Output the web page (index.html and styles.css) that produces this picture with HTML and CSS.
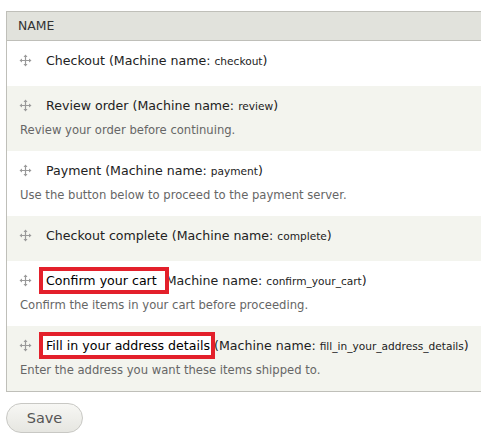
FILE: index.html
```html
<!DOCTYPE html>
<html>
<head>
<meta charset="utf-8">
<link rel="stylesheet" href="styles.css">
</head>
<body>
<div class="page">
  <div class="table">
    <div class="head">NAME</div>
    <div class="row odd">
      <div class="title"><svg class="handle" viewBox="0 0 13 13"><path d="M6.5 0.5 L8.5 3 H4.5 Z M6.5 12.5 L8.5 10 H4.5 Z M0.5 6.5 L3 4.5 V8.5 Z M12.5 6.5 L10 4.5 V8.5 Z" fill="#9a9a9a"/><path d="M6.5 2.5 V10.5 M2.5 6.5 H10.5" stroke="#9a9a9a" stroke-width="1.2"/></svg><span class="label">Checkout (Machine name: <small>checkout</small>)</span></div>
    </div>
    <div class="row even">
      <div class="title"><svg class="handle" viewBox="0 0 13 13"><path d="M6.5 0.5 L8.5 3 H4.5 Z M6.5 12.5 L8.5 10 H4.5 Z M0.5 6.5 L3 4.5 V8.5 Z M12.5 6.5 L10 4.5 V8.5 Z" fill="#9a9a9a"/><path d="M6.5 2.5 V10.5 M2.5 6.5 H10.5" stroke="#9a9a9a" stroke-width="1.2"/></svg><span class="label">Review order (Machine name: <small>review</small>)</span></div>
      <div class="desc">Review your order before continuing.</div>
    </div>
    <div class="row odd">
      <div class="title"><svg class="handle" viewBox="0 0 13 13"><path d="M6.5 0.5 L8.5 3 H4.5 Z M6.5 12.5 L8.5 10 H4.5 Z M0.5 6.5 L3 4.5 V8.5 Z M12.5 6.5 L10 4.5 V8.5 Z" fill="#9a9a9a"/><path d="M6.5 2.5 V10.5 M2.5 6.5 H10.5" stroke="#9a9a9a" stroke-width="1.2"/></svg><span class="label">Payment (Machine name: <small>payment</small>)</span></div>
      <div class="desc">Use the button below to proceed to the payment server.</div>
    </div>
    <div class="row even">
      <div class="title"><svg class="handle" viewBox="0 0 13 13"><path d="M6.5 0.5 L8.5 3 H4.5 Z M6.5 12.5 L8.5 10 H4.5 Z M0.5 6.5 L3 4.5 V8.5 Z M12.5 6.5 L10 4.5 V8.5 Z" fill="#9a9a9a"/><path d="M6.5 2.5 V10.5 M2.5 6.5 H10.5" stroke="#9a9a9a" stroke-width="1.2"/></svg><span class="label">Checkout complete (Machine name: <small>complete</small>)</span></div>
    </div>
    <div class="row odd">
      <div class="title"><svg class="handle" viewBox="0 0 13 13"><path d="M6.5 0.5 L8.5 3 H4.5 Z M6.5 12.5 L8.5 10 H4.5 Z M0.5 6.5 L3 4.5 V8.5 Z M12.5 6.5 L10 4.5 V8.5 Z" fill="#9a9a9a"/><path d="M6.5 2.5 V10.5 M2.5 6.5 H10.5" stroke="#9a9a9a" stroke-width="1.2"/></svg><span class="label"><span class="hl hl-cart">Confirm your cart</span> (Machine name: <small>confirm_your_cart</small>)</span></div>
      <div class="desc">Confirm the items in your cart before proceeding.</div>
    </div>
    <div class="row even">
      <div class="title"><svg class="handle" viewBox="0 0 13 13"><path d="M6.5 0.5 L8.5 3 H4.5 Z M6.5 12.5 L8.5 10 H4.5 Z M0.5 6.5 L3 4.5 V8.5 Z M12.5 6.5 L10 4.5 V8.5 Z" fill="#9a9a9a"/><path d="M6.5 2.5 V10.5 M2.5 6.5 H10.5" stroke="#9a9a9a" stroke-width="1.2"/></svg><span class="label"><span class="hl hl-addr">Fill in your address details</span> (Machine name: <small>fill_in_your_address_details</small>)</span></div>
      <div class="desc">Enter the address you want these items shipped to.</div>
    </div>
  </div>
  <button class="save">Save</button>
</div>
</body>
</html>
```

FILE: styles.css
```css
html, body {
  margin: 0;
  padding: 0;
  background: #fff;
}
body {
  font-family: "DejaVu Sans", "Open Sans", sans-serif;
  color: #333;
  overflow: hidden;
}
.page {
  padding: 11px 0 0 6px;
  width: 490px;
}
.table {
  width: 476px;
  border: 1px solid #bfbfb9;
}
.head {
  background: #e1e2dc;
  border-bottom: 1px solid #bfbfb9;
  height: 28px;
  line-height: 28px;
  padding-left: 11px;
  font-size: 12.4px;
  color: #333;
}
.row {
  padding: 8px 12px 15px 12px;
}
.row.odd { background: #fff; }
.row.even { background: #f3f4ee; }
.title {
  display: flex;
  align-items: center;
  height: 22px;
  white-space: nowrap;
  font-size: 12.6px;
  color: #222;
}
.handle {
  width: 13px;
  height: 13px;
  margin-right: 14px;
  flex: none;
}
.label small {
  font-size: 10.6px;
}
.desc {
  margin-top: 4px;
  margin-bottom: -4px;
  line-height: 20px;
  font-size: 11.6px;
  color: #666;
  padding-left: 1px;
}
.hl {
  position: relative;
  z-index: 0;
  color: #000;
}
.hl::before {
  content: "";
  position: absolute;
  left: -7px;
  top: -6px;
  bottom: -6px;
  background: #fff;
  border: 4px solid #e3202b;
  z-index: -1;
}
.hl-cart::before { right: -12px; }
.hl-addr::before { right: -5px; }
.save {
  display: block;
  margin-top: 11px;
  width: 77px;
  height: 30px;
  border: 1px solid #c8c8c4;
  border-radius: 15px;
  background: linear-gradient(#f7f7f4, #e6e6e1);
  font-family: "DejaVu Sans", "Open Sans", sans-serif;
  font-size: 14.5px;
  color: #555;
  padding: 0;
}
```
